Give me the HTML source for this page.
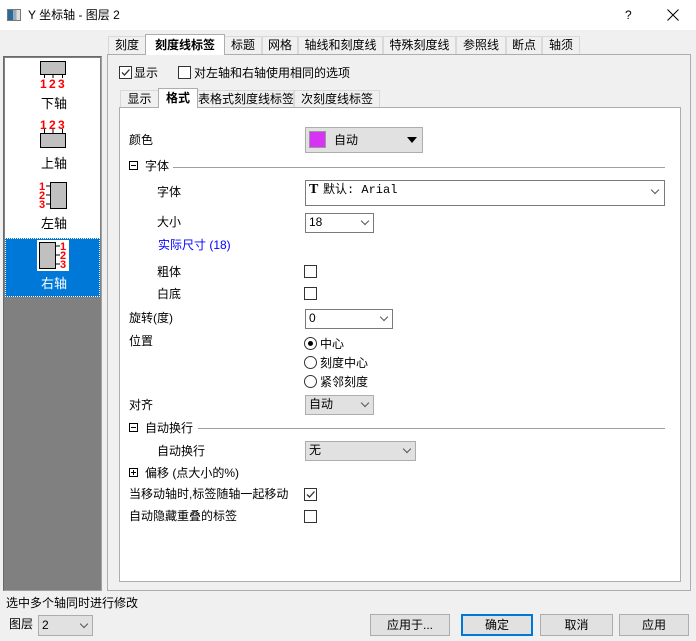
<!DOCTYPE html>
<html><head><meta charset="utf-8"><style>
*{box-sizing:border-box;margin:0;padding:0}
body{width:696px;height:641px;background:#f0f0f0;font-family:"Liberation Sans","Noto Sans CJK SC",sans-serif;font-size:12px;color:#000;position:relative;overflow:hidden}
.a{position:absolute;white-space:nowrap}
.t{line-height:14px}
.cb{position:absolute;width:13px;height:13px;border:1px solid #333;background:#fff}
.combo{position:absolute;border:1px solid #7a7a7a;background:#fff;padding-left:3px;line-height:17px;white-space:nowrap}
.combo.g{background:#e1e1e1;border-color:#adadad}
.arr{position:absolute;right:5px;top:4px;width:6px;height:6px;border-right:1px solid #555;border-bottom:1px solid #555;transform:rotate(45deg)}
.tab{position:absolute;top:36px;height:18px;border:1px solid #d9d9d9;border-bottom:none;background:#f0f0f0;text-align:center;line-height:17px;white-space:nowrap}
.stab{position:absolute;top:90px;height:17px;border:1px solid #d9d9d9;border-bottom:none;background:#f0f0f0;text-align:center;line-height:16px;white-space:nowrap;overflow:hidden}
.btn{position:absolute;top:614px;height:22px;border:1px solid #adadad;background:#e1e1e1;text-align:center;line-height:20px}
.rad{position:absolute;width:13px;height:13px;border:1px solid #333;border-radius:50%;background:#fff}
.line{position:absolute;height:1px;background:#a0a0a0}
.red{color:#f00;font-weight:bold;font-size:11px;font-family:"Liberation Sans",sans-serif}
</style></head><body>
<div class="a" style="left:0;top:0;width:696px;height:30px;background:#fff"></div>
<div class="a" style="left:7px;top:9px;width:14px;height:12px;background:linear-gradient(90deg,#2a6a9a 0 40%,#9ab 40% 70%,#ddd 70%);border:1px solid #777"></div>
<div class="a t" style="left:28px;top:8px">Y 坐标轴 - 图层 2</div>
<div class="a t" style="left:625px;top:8px">?</div>
<svg class="a" style="left:667px;top:9px" width="12" height="12"><path d="M0.5 0.5 L11.5 11.5 M11.5 0.5 L0.5 11.5" stroke="#000" stroke-width="1"/></svg>

<!-- left list -->
<div class="a" style="left:3px;top:56px;width:99px;height:535px;border:1px solid #a0a0a0;border-top-color:#696969;border-left-color:#696969;background:#808080"></div>
<div class="a" style="left:5px;top:58px;width:95px;height:180px;background:#fff"></div>
<svg class="a" style="left:38px;top:60px" width="30" height="30">
<rect x="2.5" y="1.5" width="25" height="13" fill="#c0c0c0" stroke="#000"/>
<path d="M6.5 15v3M15 15v3M24.5 15v3" stroke="#000"/>
<text x="2" y="28" fill="#f00" font-weight="bold" font-size="12" font-family="Liberation Sans">1</text>
<text x="11" y="28" fill="#f00" font-weight="bold" font-size="12" font-family="Liberation Sans">2</text>
<text x="20" y="28" fill="#f00" font-weight="bold" font-size="12" font-family="Liberation Sans">3</text>
</svg>
<div class="a t" style="left:41px;top:97px;font-size:13px">下轴</div>
<svg class="a" style="left:38px;top:119px" width="30" height="30">
<text x="2" y="10" fill="#f00" font-weight="bold" font-size="12" font-family="Liberation Sans">1</text>
<text x="11" y="10" fill="#f00" font-weight="bold" font-size="12" font-family="Liberation Sans">2</text>
<text x="20" y="10" fill="#f00" font-weight="bold" font-size="12" font-family="Liberation Sans">3</text>
<path d="M6.5 10v4M15 10v4M24.5 10v4" stroke="#000"/>
<rect x="2.5" y="14.5" width="25" height="14" fill="#c0c0c0" stroke="#000"/>
</svg>
<div class="a t" style="left:41px;top:157px;font-size:13px">上轴</div>
<svg class="a" style="left:38px;top:181px" width="30" height="30">
<rect x="12.5" y="1.5" width="16" height="26" fill="#c0c0c0" stroke="#000"/>
<path d="M8 5h4M8 14h4M8 23h4" stroke="#000"/>
<text x="1" y="9" fill="#f00" font-weight="bold" font-size="11" font-family="Liberation Sans">1</text>
<text x="1" y="18" fill="#f00" font-weight="bold" font-size="11" font-family="Liberation Sans">2</text>
<text x="1" y="27" fill="#f00" font-weight="bold" font-size="11" font-family="Liberation Sans">3</text>
</svg>
<div class="a t" style="left:41px;top:217px;font-size:13px">左轴</div>
<div class="a" style="left:5px;top:238px;width:95px;height:59px;background:#0078d7;border:1px dotted #fff"></div>
<svg class="a" style="left:37px;top:240px" width="32" height="31">
<rect x="0" y="0" width="32" height="31" fill="#fff"/>
<rect x="2.5" y="2.5" width="16" height="26" fill="#c0c0c0" stroke="#000"/>
<path d="M19 6h4M19 15h4M19 24h4" stroke="#000"/>
<text x="23" y="10" fill="#f00" font-weight="bold" font-size="11" font-family="Liberation Sans">1</text>
<text x="23" y="19" fill="#f00" font-weight="bold" font-size="11" font-family="Liberation Sans">2</text>
<text x="23" y="28" fill="#f00" font-weight="bold" font-size="11" font-family="Liberation Sans">3</text>
</svg>
<div class="a t" style="left:41px;top:277px;font-size:13px;color:#fff">右轴</div>

<!-- tabs -->
<div class="a" style="left:107px;top:54px;width:584px;height:537px;border:1px solid #adadad;background:#f0f0f0"></div>
<div class="tab" style="left:108px;width:38px">刻度</div>
<div class="tab" style="left:224px;width:38px">标题</div>
<div class="tab" style="left:262px;width:36px">网格</div>
<div class="tab" style="left:298px;width:85px">轴线和刻度线</div>
<div class="tab" style="left:383px;width:73px">特殊刻度线</div>
<div class="tab" style="left:456px;width:50px">参照线</div>
<div class="tab" style="left:506px;width:36px">断点</div>
<div class="tab" style="left:542px;width:38px">轴须</div>
<div class="tab" style="left:145px;top:34px;width:80px;height:21px;background:#fff;font-weight:bold;line-height:21px;border-color:#adadad">刻度线标签</div>

<div class="cb" style="left:119px;top:66px"><svg width="11" height="11" style="position:absolute;left:0;top:0"><path d="M2 5.5 L4.5 8 L9.5 2.5" stroke="#333" stroke-width="1.3" fill="none"/></svg></div>
<div class="a t" style="left:134px;top:66px">显示</div>
<div class="cb" style="left:178px;top:66px"></div>
<div class="a t" style="left:194px;top:66px">对左轴和右轴使用相同的选项</div>

<div class="a" style="left:119px;top:107px;width:562px;height:475px;border:1px solid #adadad;background:#fff"></div>
<div class="stab" style="left:120px;width:39px">显示</div>
<div class="stab" style="left:197px;width:97px">表格式刻度线标签</div>
<div class="stab" style="left:294px;width:86px">次刻度线标签</div>
<div class="stab" style="left:158px;top:88px;width:40px;height:20px;background:#fff;font-weight:bold;line-height:19px;border-color:#adadad">格式</div>

<div class="a t" style="left:129px;top:133px">颜色</div>
<div class="a" style="left:305px;top:127px;width:118px;height:26px;border:1px solid #adadad;background:#e1e1e1"></div>
<div class="a" style="left:309px;top:131px;width:17px;height:17px;background:#d633f5;border:1px solid #999"></div>
<div class="a t" style="left:334px;top:133px">自动</div>
<div class="a" style="left:407px;top:137px;width:0;height:0;border-left:5px solid transparent;border-right:5px solid transparent;border-top:6px solid #000"></div>

<div class="a" style="left:129px;top:161px;width:9px;height:9px;border:1px solid #000"></div>
<div class="a" style="left:131px;top:165px;width:5px;height:1px;background:#000"></div>
<div class="a t" style="left:145px;top:159px">字体</div>
<div class="line" style="left:173px;top:167px;width:492px"></div>

<div class="a t" style="left:157px;top:185px">字体</div>
<div class="a" style="left:305px;top:180px;width:360px;height:26px;border:1px solid #7a7a7a;background:#fff"></div>
<div class="a" style="left:309px;top:182px;font-family:'Liberation Serif',serif;font-weight:bold;font-size:14px">T</div>
<div class="a t" style="left:323px;top:183px;font-family:'Liberation Mono','Noto Sans CJK SC',monospace">默认: Arial</div>
<div class="arr" style="left:652px;top:187px"></div>

<div class="a t" style="left:157px;top:215px">大小</div>
<div class="combo" style="left:305px;top:213px;width:69px;height:20px">18<div class="arr"></div></div>
<div class="a t" style="left:158px;top:238px;color:#0000ff">实际尺寸 (18)</div>

<div class="a t" style="left:157px;top:265px">粗体</div>
<div class="cb" style="left:304px;top:265px"></div>
<div class="a t" style="left:157px;top:287px">白底</div>
<div class="cb" style="left:304px;top:287px"></div>

<div class="a t" style="left:129px;top:311px">旋转(度)</div>
<div class="combo" style="left:305px;top:309px;width:88px;height:20px">0<div class="arr"></div></div>

<div class="a t" style="left:129px;top:334px">位置</div>
<div class="rad" style="left:304px;top:337px"><div style="position:absolute;left:3px;top:3px;width:5px;height:5px;border-radius:50%;background:#000"></div></div>
<div class="a t" style="left:320px;top:337px">中心</div>
<div class="rad" style="left:304px;top:356px"></div>
<div class="a t" style="left:320px;top:356px">刻度中心</div>
<div class="rad" style="left:304px;top:375px"></div>
<div class="a t" style="left:320px;top:375px">紧邻刻度</div>

<div class="a t" style="left:129px;top:398px">对齐</div>
<div class="combo g" style="left:305px;top:395px;width:69px;height:20px">自动<div class="arr"></div></div>

<div class="a" style="left:129px;top:423px;width:9px;height:9px;border:1px solid #000"></div>
<div class="a" style="left:131px;top:427px;width:5px;height:1px;background:#000"></div>
<div class="a t" style="left:145px;top:421px">自动换行</div>
<div class="line" style="left:198px;top:428px;width:467px"></div>

<div class="a t" style="left:157px;top:444px">自动换行</div>
<div class="combo g" style="left:305px;top:441px;width:111px;height:20px">无<div class="arr"></div></div>

<div class="a" style="left:129px;top:468px;width:9px;height:9px;border:1px solid #000"></div>
<div class="a" style="left:131px;top:472px;width:5px;height:1px;background:#000"></div>
<div class="a" style="left:133px;top:470px;width:1px;height:5px;background:#000"></div>
<div class="a t" style="left:145px;top:466px">偏移 (点大小的%)</div>

<div class="a t" style="left:129px;top:487px">当移动轴时,标签随轴一起移动</div>
<div class="cb" style="left:304px;top:488px"><svg width="11" height="11" style="position:absolute;left:0;top:0"><path d="M2 5.5 L4.5 8 L9.5 2.5" stroke="#333" stroke-width="1.3" fill="none"/></svg></div>
<div class="a t" style="left:129px;top:509px">自动隐藏重叠的标签</div>
<div class="cb" style="left:304px;top:510px"></div>

<!-- bottom -->
<div class="a t" style="left:6px;top:596px">选中多个轴同时进行修改</div>
<div class="a t" style="left:9px;top:617px">图层</div>
<div class="combo g" style="left:38px;top:615px;width:55px;height:21px;line-height:19px">2<div class="arr" style="top:5px"></div></div>
<div class="btn" style="left:370px;width:80px">应用于...</div>
<div class="btn" style="left:461px;width:72px;border:2px solid #0078d7;line-height:18px">确定</div>
<div class="btn" style="left:540px;width:73px">取消</div>
<div class="btn" style="left:619px;width:70px">应用</div>
</body></html>
